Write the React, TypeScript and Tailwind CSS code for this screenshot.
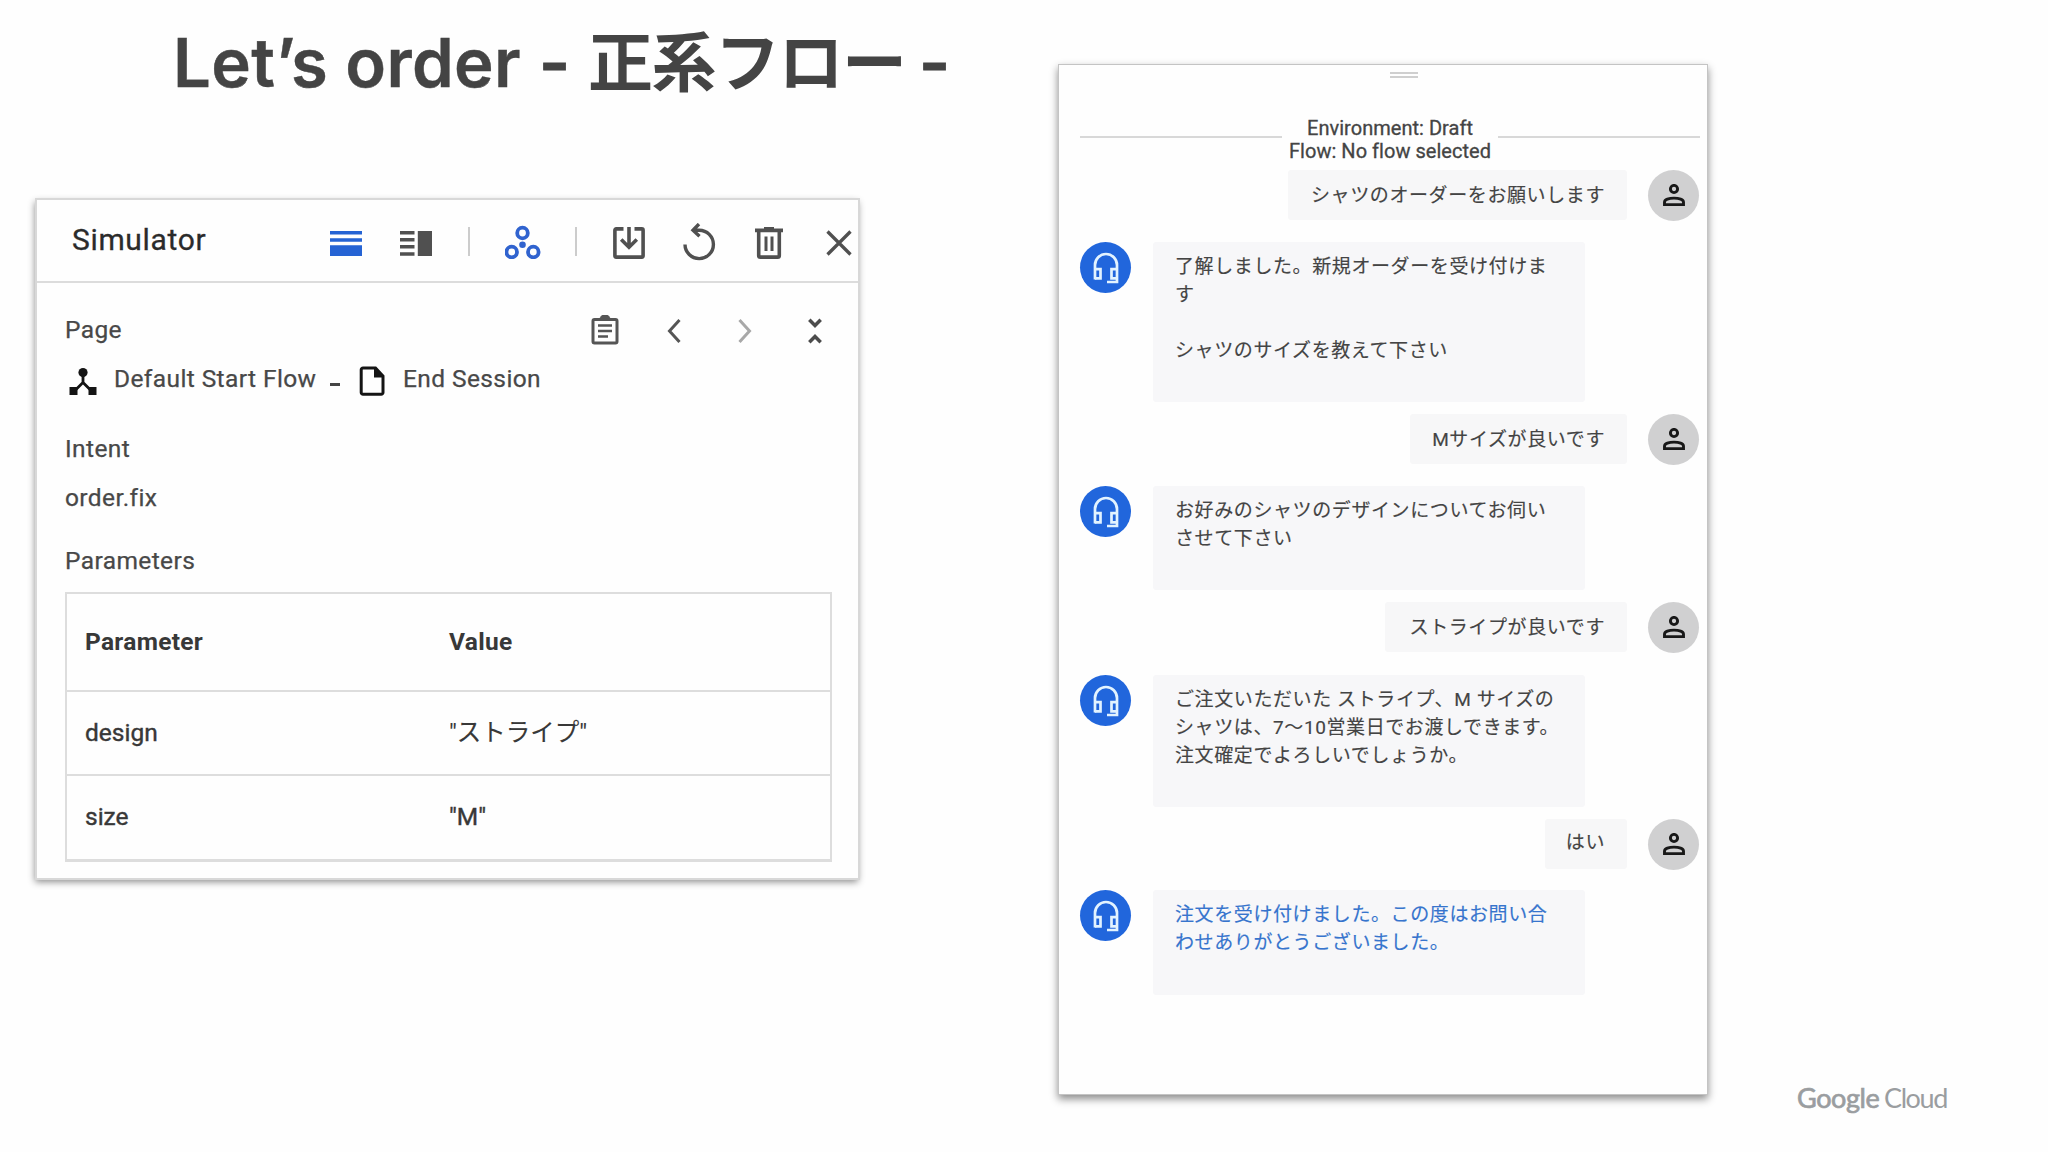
import type { ReactNode } from "react";

type Message = { from: "user" | "bot"; lines: string[]; box: string; blue?: boolean };

const messages: Message[] = [
  { from: "user", lines: ["シャツのオーダーをお願いします"], box: "mt-[5px] h-[50px] w-[339px] pt-[12px]" },
  { from: "bot", lines: ["了解しました。新規オーダーを受け付けま", "す", "", "シャツのサイズを教えて下さい"], box: "mt-[22px] h-[160px]" },
  { from: "user", lines: ["Mサイズが良いです"], box: "mt-[12px] h-[50px] w-[217px] pt-[12px]" },
  { from: "bot", lines: ["お好みのシャツのデザインについてお伺い", "させて下さい"], box: "mt-[22px] h-[104px]" },
  { from: "user", lines: ["ストライプが良いです"], box: "mt-[12px] h-[50px] w-[242px] pt-[12px]" },
  { from: "bot", lines: ["ご注文いただいた ストライプ、M サイズの", "シャツは、7〜10営業日でお渡しできます。", "注文確定でよろしいでしょうか。"], box: "mt-[23px] h-[132px]" },
  { from: "user", lines: ["はい"], box: "mt-[12px] h-[50px] w-[82px] pt-[10px]" },
  { from: "bot", lines: ["注文を受け付けました。この度はお問い合", "わせありがとうございました。"], box: "mt-[21px] h-[105px]", blue: true },
];

function UserAvatar() {
  return (
    <span className="ml-[21px] flex size-[51px] shrink-0 items-center justify-center rounded-full bg-[#d0d0d1]">
      <svg width="22" height="22" viewBox="0 0 22 22" fill="none" stroke="#181818" strokeWidth="2.9">
        <circle cx="11" cy="5" r="3.6" />
        <path d="M1.5 20.6v-2.400c0-2.600 4.500-4.100 9.500-4.100s9.500 1.500 9.500 4.100v2.400z" />
      </svg>
    </span>
  );
}

function BotAvatar() {
  return (
    <span className="flex size-[51px] shrink-0 items-center justify-center rounded-full bg-[#2166dc]">
      <svg width="26" height="32" viewBox="0 0 26 32" fill="none" stroke="#e2f3ff" strokeWidth="2.7">
        <path d="M2 27.500V13a11 11 0 0 1 22 0v17H14" />
        <path d="M2 17.200h5.500v9.200H2M24 17.200h-5.500v9.200H24" />
      </svg>
    </span>
  );
}

function ChatRow({ m }: { m: Message }) {
  if (m.from === "user") {
    return (
      <div className="flex justify-end pr-[8px]">
        <div className={`${m.box} flex items-start justify-end rounded-[3px] bg-[#f7f7f8] pr-[22px] text-[#444444]`}>
          {m.lines[0]}
        </div>
        <div className={`${m.box} flex w-auto! items-center pt-0!`}>
          <UserAvatar />
        </div>
      </div>
    );
  }
  return (
    <div className="flex items-start pl-[21px]">
      <div className={`${m.box} h-auto!`}>
        <BotAvatar />
      </div>
      <div className={`${m.box} ml-[22px] w-[432px] rounded-[3px] bg-[#f7f7f9] pl-[22px] pt-[11px] ${m.blue ? "text-[#3674cd]" : "text-[#444444]"}`}>
        {m.lines.map((line, i) => (
          <div key={i} className="h-[28px]">
            {line}
          </div>
        ))}
      </div>
    </div>
  );
}

function Ico({ w, h, className, children, sw = 3 }: { w: number; h: number; className: string; children: ReactNode; sw?: number }) {
  return (
    <svg width={w} height={h} viewBox={`0 0 ${w} ${h}`} className={`shrink-0 ${className}`} fill="none" stroke="currentColor" strokeWidth={sw}>
      {children}
    </svg>
  );
}

function Toolbar() {
  return (
    <div className="flex h-[83px] items-start border-b-2 border-[#dcdcdc] pl-[35px] text-[#505050]">
      <h2 className="mt-[18px] w-[258px] text-[30px] leading-[44px] tracking-[0.65px] text-[#2b2b2b] [-webkit-text-stroke:0.3px_#2b2b2b]">Simulator</h2>
      <Ico w={32} h={26} className="mt-[30px] text-[#2563d4]" sw={0}>
        <path fill="currentColor" d="M0 1h32v3.4H0zM0 8.200h32v3.500H0zM0 15.200h32V26H0z" />
      </Ico>
      <Ico w={32} h={26} className="ml-[38px] mt-[30px]" sw={0}>
        <path fill="currentColor" d="M0 1h14.500v3.400H0zM0 8h14.500v3.400H0zM0 15h14.500v3.400H0zM0 22.300h14.500v3.400H0zM17.800 1H32v25H17.800z" />
      </Ico>
      <span className="ml-[36px] mt-[27px] h-[29px] w-[2px] bg-[#cccccc]" />
      <Ico w={36} h={34} className="ml-[35px] mt-[25px] text-[#3063cf]" sw={3.8}>
        <circle cx="17.5" cy="8" r="5.3" />
        <circle cx="6.7" cy="27" r="5.3" />
        <circle cx="28.3" cy="27" r="5.3" />
        <circle cx="17.5" cy="19.7" r="3.3" fill="currentColor" stroke="none" />
      </Ico>
      <span className="ml-[34px] mt-[27px] h-[29px] w-[2px] bg-[#cccccc]" />
      <Ico w={32} h={32} className="ml-[36px] mt-[27px]" sw={3.6}>
        <path d="M10.5 1.900H3.200a1.300 1.300 0 0 0-1.300 1.300v25.600a1.300 1.300 0 0 0 1.300 1.300h25.600a1.300 1.300 0 0 0 1.300-1.300V3.200a1.300 1.300 0 0 0-1.300-1.300h-7.300M16 0v20M8.200 12.500l7.800 7.800 7.800-7.800" />
      </Ico>
      <Ico w={34} h={38} className="ml-[38px] mt-[23px]" sw={3.4}>
        <path d="M2 21.500A14.200 14.200 0 1 0 16.200 7.200H11M16 1L10 7.200l6.500 6" />
      </Ico>
      <Ico w={28} h={32} className="ml-[38px] mt-[27px]" sw={3.6}>
        <path d="M0 3.400h28M9 1.700h10M3.700 3.400v25a1.700 1.700 0 0 0 1.700 1.700h17.200a1.700 1.700 0 0 0 1.700-1.700v-25" />
        <path d="M11 9.500v14.500M17 9.500v14.500" strokeWidth="3" />
      </Ico>
      <Ico w={26} h={26} className="ml-[43px] mt-[30px]" sw={3.3}>
        <path d="M1.5 1.500l23 23M24.500 1.500l-23 23" />
      </Ico>
    </div>
  );
}

function Simulator() {
  return (
    <section className="ml-[37px] mt-[82px] h-[678px] w-[821px] bg-[#fefefe] text-[24.5px] leading-[32px] tracking-[0.4px] text-[#484848] shadow-[0_0_0_2px_#d8d8d8,-1px_3px_7px_1px_rgba(0,0,0,0.45)]">
      <Toolbar />
      <div className="flex h-[65px] items-start pl-[28px] pt-[31px] [-webkit-text-stroke:0.25px_#484848]">
        <span className="w-[526px]">Page</span>
        <Ico w={28} h={30} className="mt-px text-[#555555]">
          <rect x="2" y="4.5" width="24" height="23.5" rx="1.5" />
          <path d="M9 4.500a5 5 0 0 1 10 0z" fill="currentColor" strokeWidth="1" />
          <path d="M7 10.500h14M7 16h14M7 21.500h10" strokeWidth="2.6" />
        </Ico>
        <Ico w={14} h={26} className="ml-[48px] mt-[4px] text-[#555555]">
          <path d="M12.5 2L2.500 13l10 11" />
        </Ico>
        <Ico w={14} h={26} className="ml-[57px] mt-[4px] text-[#a8a8a8]">
          <path d="M1.5 2l10 11-10 11" />
        </Ico>
        <Ico w={14} h={26} className="ml-[56px] mt-[4px] text-[#4c4c4c]" sw={3.5}>
          <path d="M1.3 1.800L7 7.500l5.700-5.700M1.300 24.200L7 18.500l5.700 5.700" />
        </Ico>
      </div>
      <div className="flex h-[50px] items-start pl-[32px] pt-[15px] [-webkit-text-stroke:0.25px_#484848]">
        <Ico w={28} h={28} className="mt-[5px] text-[#141414]" sw={2.8}>
          <circle cx="14" cy="4.6" r="4.6" fill="currentColor" stroke="none" />
          <path d="M14 5v9.500L5 23.500M14 14.500l9 9" />
          <path d="M0.5 19h8v8h-8zM19.500 19h8v8h-8z" fill="currentColor" stroke="none" />
        </Ico>
        <span className="ml-[17px] w-[216px]">Default Start Flow</span>
        <span className="mt-[20px] h-[3px] w-[10px] bg-[#444444]" />
        <Ico w={26} h={30} className="ml-[19px] mt-[3px] text-[#141414]">
          <path d="M4 2h12.500l7.500 8v16.500a1.800 1.800 0 0 1-1.800 1.800H4A1.800 1.800 0 0 1 2.200 26.500V3.800A1.800 1.800 0 0 1 4 2z" />
          <path d="M15 2v9.500h9.500z" fill="currentColor" stroke="none" />
        </Ico>
        <span className="ml-[18px]">End Session</span>
      </div>
      <div className="mt-[35px] pl-[28px] [-webkit-text-stroke:0.25px_#484848]">
        <div className="h-[49px]">Intent</div>
        <div className="h-[63px]">order.fix</div>
        <div className="h-[47px]">Parameters</div>
      </div>
      <div className="ml-[28px] w-[767px] border-2 border-b-[3px] border-[#dddddd] text-[#383838]">
        <div className="flex h-[98px] items-center border-b-2 border-[#dddddd] pb-px pl-[18px] font-bold tracking-[0.3px]">
          <span className="w-[364px]">Parameter</span>
          <span>Value</span>
        </div>
        <div className="flex h-[84px] items-center border-b-2 border-[#dddddd] pl-[18px] tracking-normal [-webkit-text-stroke:0.4px_#383838]">
          <span className="w-[364px]">design</span>
          <span className="[-webkit-text-stroke:0.1px_#383838]">"ストライプ"</span>
        </div>
        <div className="flex h-[83px] items-center pb-px pl-[18px] tracking-normal [-webkit-text-stroke:0.4px_#383838]">
          <span className="w-[364px]">size</span>
          <span>"M"</span>
        </div>
      </div>
    </section>
  );
}

export default function App() {
  return (
    <main className="flex h-[1152px] w-[2048px] overflow-hidden whitespace-nowrap bg-[#fefefe] font-['Roboto','Noto_Sans_CJK_JP',sans-serif]">
      <div className="w-[1059px]">
        <h1 className="flex h-[118px] items-start pl-[173px] pt-[23px] font-['Inter','Noto_Sans_CJK_JP',sans-serif] text-[67px] font-semibold leading-[80px] text-[#444444]">
          <span className="w-[366px] tracking-[0.35px] [-webkit-text-stroke:0.4px]">Let’s order</span>
          <span className="w-[49px] [-webkit-text-stroke:0.8px]">-</span>
          <span className="w-[331px] text-[65px] font-bold tracking-[-1.5px]">正系フロー</span>
          <span className="[-webkit-text-stroke:0.8px]">-</span>
        </h1>
        <Simulator />
      </div>
      <section className="mt-[65px] h-[1029px] w-[648px] bg-[#fefefe] text-[19px] leading-[28px] tracking-[0.6px] shadow-[0_0_0_1px_#c4c4c4,0_4px_8px_1px_rgba(0,0,0,0.45)] [-webkit-text-stroke:0.15px]">
        <div className="ml-[331px] mt-[7px] h-[6px] w-[28px] border-y-2 border-[#cfcfcf]" />
        <div className="mt-[37px] flex h-[50px] justify-between pl-[21px] pr-[7px] text-[#444444]">
          <span className="mt-[21px] h-[2px] w-[202px] bg-[#d8d8d8]" />
          <div className="pt-[2px] text-center text-[20px] leading-[23px] tracking-[0.03px] [-webkit-text-stroke:0.3px]">
            <div>Environment: Draft</div>
            <div>Flow: No flow selected</div>
          </div>
          <span className="mt-[21px] h-[2px] w-[202px] bg-[#d8d8d8]" />
        </div>
        {messages.map((m, i) => (
          <ChatRow key={i} m={m} />
        ))}
      </section>
      <footer className="ml-[90px] mt-[1080px] flex font-['Lato',sans-serif] text-[27px] leading-[36px] text-[#9a9da0]">
        <span className="w-[87px] tracking-[-0.4px] [-webkit-text-stroke:0.7px]">Google</span>
        <span className="tracking-[-1.4px]">Cloud</span>
      </footer>
    </main>
  );
}
